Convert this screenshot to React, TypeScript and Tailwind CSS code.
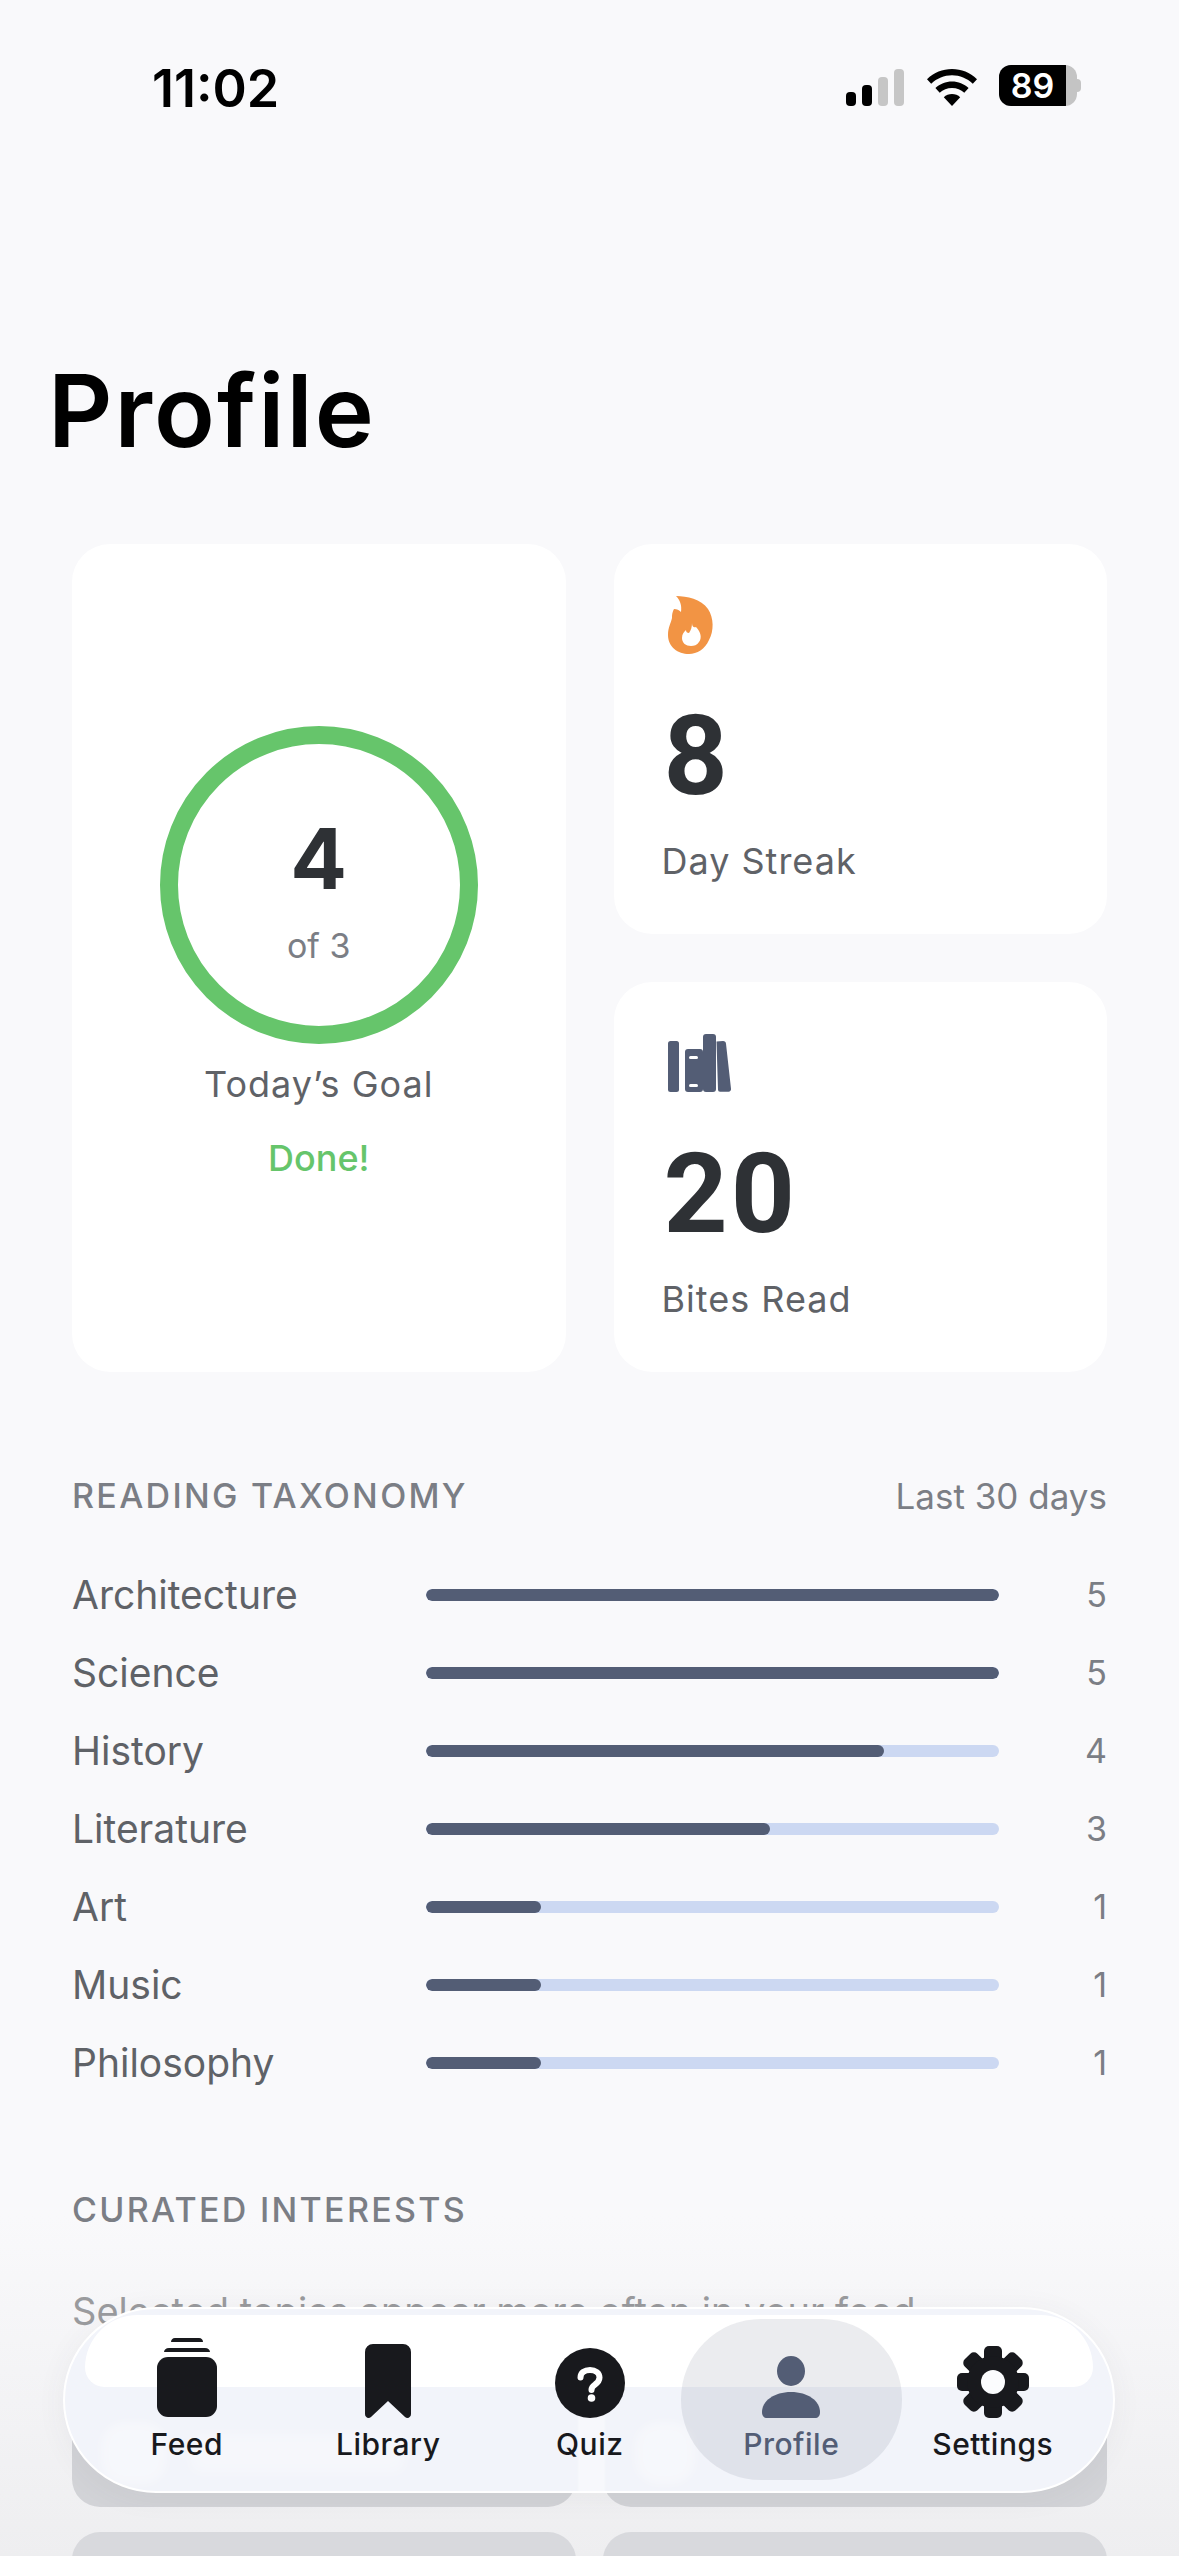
const topics = [
  { name: "Architecture", count: 5, fill: "w-full" },
  { name: "Science", count: 5, fill: "w-full" },
  { name: "History", count: 4, fill: "w-4/5" },
  { name: "Literature", count: 3, fill: "w-3/5" },
  { name: "Art", count: 1, fill: "w-1/5" },
  { name: "Music", count: 1, fill: "w-1/5" },
  { name: "Philosophy", count: 1, fill: "w-1/5" },
]

function StatusBar() {
  return (
    <div className="h-[176px] pt-[58px] pl-[152px] pr-[98px] flex items-start justify-between">
      <span className="text-[52px] leading-[62px] font-semibold text-black">11:02</span>
      <div className="flex items-start pt-[9px]">
        <svg width="58" height="37" viewBox="0 0 58 37" className="mt-[2px]">
          <rect x="0" y="23" width="10" height="14" rx="4" fill="#000" />
          <rect x="16" y="16" width="10" height="21" rx="4" fill="#000" />
          <rect x="32" y="8" width="10" height="29" rx="4" fill="#c6c6c6" />
          <rect x="48" y="0" width="10" height="37" rx="4" fill="#c6c6c6" />
        </svg>
        <svg width="50" height="37" viewBox="0 0 50 37" className="ml-[23px] mt-[2px]">
          <path d="M25 0C15.500 0 7 3.600 0 10.200l4.200 4.600C10 9.300 17.200 6.300 25 6.300s15 3 20.800 8.500l4.200-4.600C43 3.600 34.500 0 25 0Z" fill="#000" />
          <path d="M25 12.500c-6.300 0-12 2.400-16.600 6.600l4.300 4.700c3.300-3 7.500-4.800 12.300-4.800s9 1.800 12.300 4.800l4.300-4.700C37 14.900 31.300 12.500 25 12.500Z" fill="#000" />
          <path d="M25 25c-3.100 0-6 1.100-8.200 3.200L25 37l8.200-8.800C31 26.100 28.100 25 25 25Z" fill="#000" />
        </svg>
        <div className="ml-[22px] -mt-[2px] flex items-center">
          <div className="w-[78px] h-[41px] rounded-[12px] bg-[#c4c4c4] overflow-hidden">
            <div className="w-[67px] h-[41px] bg-black flex items-center justify-center text-white text-[34px] font-semibold leading-none">89</div>
          </div>
          <div className="w-[4px] h-[13px] bg-[#c4c4c4] rounded-r-full" />
        </div>
      </div>
    </div>
  )
}

function Flame() {
  return (
    <svg width="46" height="58" viewBox="0 0 46 58">
      <path d="M8 0C19 0 33 3 40 13c6 9 6 22 1 31-4 9-12 14-20 14C10 58 0 51 0 39c0-8 3-12 4-17 0-5 1-7 2-9 3 0 5 1 7 3 1-7-1-12-5-16Z" fill="#f29444" />
      <path d="M24 27c0 4 2 5 4 4 5 5 6 11 3 15-2 3-5 4-8 4-5 0-9-3-9-8 0-4 2-6 4-8 0 2 1 3 3 3 2-3 3-6 3-10Z" fill="#fff" />
    </svg>
  )
}

function Books() {
  return (
    <svg width="64" height="58" viewBox="0 0 64 58">
      <rect x="0" y="7" width="11" height="51" rx="2.500" fill="#535d75" />
      <path d="M17 18a3 3 0 0 1 3-3h12a3 3 0 0 1 3 3v37a3 3 0 0 1-3 3H20a3 3 0 0 1-3-3Z" fill="#535d75" />
      <rect x="21" y="22" width="9" height="3" rx="1.500" fill="#fff" />
      <rect x="21" y="50" width="9" height="3" rx="1.500" fill="#fff" />
      <rect x="35" y="0" width="13" height="58" rx="3" fill="#535d75" />
      <path d="M48.500 7.500 L55 7a3 3 0 0 1 3 2.700l5 45a2.500 2.500 0 0 1-2.500 3H52a2 2 0 0 1-2-2Z" fill="#535d75" />
    </svg>
  )
}

function FeedIcon() {
  return (
    <svg width="60" height="80" viewBox="0 0 60 80" fill="#18191d">
      <path d="M14 4c0-2 1.500-4 4-4h24c2.500 0 4 2 4 4Z" />
      <path d="M7 14c0-2 2-4 5-4h36c3 0 5 2 5 4Z" />
      <rect x="0" y="19" width="60" height="60" rx="11" />
    </svg>
  )
}

function LibraryIcon() {
  return (
    <svg width="46" height="74" viewBox="0 0 46 74" fill="#18191d">
      <path d="M0 8a8 8 0 0 1 8-8h30a8 8 0 0 1 8 8v62c0 3.500-3.500 5-6 3L23 57 6 73c-2.500 2-6 .5-6-3Z" />
    </svg>
  )
}

function QuizIcon() {
  return (
    <svg width="70" height="70" viewBox="0 0 70 70">
      <circle cx="35" cy="35" r="35" fill="#18191d" />
      <path d="M25.500 29.500c0-4.800 4-7.500 9.500-7.500s9.500 2.900 9.500 7.500c0 3.800-2.300 5.500-4.700 7.200-2.300 1.500-3.300 2.700-3.300 5.300" fill="none" stroke="#fff" strokeWidth="6" strokeLinecap="round" />
      <circle cx="36.500" cy="50" r="3.800" fill="#fff" />
    </svg>
  )
}

function ProfileIcon() {
  return (
    <svg width="58" height="62" viewBox="0 0 58 62" fill="#535d75">
      <ellipse cx="29" cy="15" rx="14" ry="15" />
      <path d="M0 56C0 45 12 36 29 36s29 9 29 20c0 4-2 6-5 6H5c-3 0-5-2-5-6Z" />
    </svg>
  )
}

function GearIcon() {
  const angles = [0, 45, 90, 135, 180, 225, 270, 315]
  return (
    <svg width="72" height="72" viewBox="0 0 72 72">
      {angles.map((a) => (
        <rect key={a} x="27" y="0" width="18" height="20" rx="5" fill="#18191d" transform={`rotate(${a} 36 36)`} />
      ))}
      <circle cx="36" cy="36" r="26" fill="#18191d" />
      <circle cx="36" cy="36" r="12" fill="#fbfcfe" />
    </svg>
  )
}

function NavItem({ label, active, icon }: { label: string; active?: boolean; icon: React.ReactNode }) {
  return (
    <div className="relative w-[201.500px] h-[130px] flex flex-col items-center">
      {active && <div className="absolute -left-[10px] -right-[10px] -top-[15px] h-[161px] rounded-[80px] bg-[#5b6478]/12" />}
      <div className="relative h-[84px] flex items-end">{icon}</div>
      <span className={`relative mt-[7px] text-[30px] leading-[38px] font-medium tracking-[0.5px] ${active ? "text-[#535d75]" : "text-[#18191d]"}`}>{label}</span>
    </div>
  )
}

function TabBar() {
  return (
    <div className="absolute left-[63px] top-[2307px] w-[1052px] h-[186px] rounded-[93px] border-2 border-white bg-[#f2f4fa] overflow-hidden shadow-[0_4px_30px_rgba(60,70,90,0.06)]">
      <div className="absolute left-[20px] right-[20px] top-[6px] h-[72px] rounded-t-[70px] rounded-b-[26px] bg-white" />
      <div className="absolute left-[36px] top-[113px] w-[66px] h-[62px] rounded-[24px] bg-white/35 blur-[5px]" />
      <div className="absolute left-[125px] top-[124px] w-[215px] h-[40px] rounded-[10px] bg-white/30 blur-[6px]" />
      <div className="absolute left-[513px] top-[75px] w-[27px] h-[110px] bg-white/40 blur-[1px]" />
      <div className="absolute left-[570px] top-[113px] w-[60px] h-[62px] rounded-[24px] bg-white/35 blur-[5px]" />
      <div className="relative pl-[21px] pt-[25px] flex">
        <NavItem label="Feed" icon={<FeedIcon />} />
        <NavItem label="Library" icon={<LibraryIcon />} />
        <NavItem label="Quiz" icon={<QuizIcon />} />
        <NavItem label="Profile" active icon={<ProfileIcon />} />
        <NavItem label="Settings" icon={<GearIcon />} />
      </div>
    </div>
  )
}

function StatCard({ icon, value, label }: { icon: React.ReactNode; value: string; label: string }) {
  return (
    <div className="h-[390px] rounded-[38px] bg-white pl-[48px] pt-[50px]">
      <div className="h-[60px] pl-[6px] flex items-end">{icon}</div>
      <div className="mt-[44px] pl-[2px] text-[112px] leading-[116px] font-bold text-[#2e3135] font-['Roboto'] tracking-[3px]">{value}</div>
      <div className="mt-[25px] text-[36px] leading-[44px] text-[#5f6267] tracking-[1px]">{label}</div>
    </div>
  )
}

export default function App() {
  return (
    <div className="relative w-[1179px] h-[2556px] overflow-hidden bg-[#f9f9fb] font-['Inter',sans-serif]">
      <div className="absolute inset-x-0 bottom-0 h-[340px] bg-gradient-to-b from-[#f9f9fb] to-[#eeeef0]" />
      <div className="relative">
        <StatusBar />
        <h1 className="pl-[48px] mt-[175px] text-[100px] leading-[120px] font-semibold text-black tracking-[2px]">Profile</h1>

        <div className="mt-[73px] mx-[72px] grid grid-cols-2 gap-[48px]">
          <div className="row-span-2 rounded-[38px] bg-white flex flex-col items-center pt-[182px]">
            <div className="w-[318px] h-[318px] rounded-full border-[18px] border-[#66c56b] flex flex-col items-center">
              <span className="mt-[65px] text-[84px] leading-[100px] font-bold text-[#2e3135]">4</span>
              <span className="mt-[16px] text-[34px] leading-[42px] text-[#7b7e85]">of 3</span>
            </div>
            <span className="mt-[18px] text-[36px] leading-[44px] text-[#5f6267] tracking-[1px]">Today’s Goal</span>
            <span className="mt-[30px] text-[36px] leading-[44px] font-medium text-[#66c56b]">Done!</span>
          </div>
          <StatCard icon={<Flame />} value="8" label="Day Streak" />
          <StatCard icon={<Books />} value="20" label="Bites Read" />
        </div>

        <div className="mt-[102px] mx-[72px] flex items-center justify-between text-[#7b7e85]">
          <span className="text-[34px] leading-[44px] font-medium tracking-[2.300px]">READING TAXONOMY</span>
          <span className="text-[35px] leading-[44px]">Last 30 days</span>
        </div>

        <div className="mt-[38px] mx-[72px] flex flex-col">
          {topics.map((t) => (
            <div key={t.name} className="h-[78px] flex items-center">
              <span className="w-[354px] text-[39px] leading-[48px] text-[#5f6267]">{t.name}</span>
              <div className="w-[573px] h-[12px] rounded-full bg-[#ccd8f2] overflow-hidden">
                <div className={`h-full rounded-full bg-[#535d75] ${t.fill}`} />
              </div>
              <span className="ml-auto text-[34px] leading-[44px] text-[#7b7e85]">{t.count}</span>
            </div>
          ))}
        </div>

        <div className="mt-[86px] mx-[72px] text-[34px] leading-[44px] font-medium tracking-[2.300px] text-[#7b7e85]">CURATED INTERESTS</div>
        <div className="mt-[55px] mx-[72px] text-[38px] leading-[48px] text-[#9a9b9e]">Selected topics appear more often in your feed</div>

        <div className="mt-[40px] mx-[72px] grid grid-cols-2 gap-x-[27px] gap-y-[25px]">
          <div className="h-[132px] rounded-[28px] bg-[#d2d3d7]" />
          <div className="h-[132px] rounded-[28px] bg-[#d2d3d7]" />
          <div className="h-[132px] rounded-[28px] bg-[#d8d9dd]" />
          <div className="h-[132px] rounded-[28px] bg-[#d8d9dd]" />
        </div>
      </div>

      <TabBar />
    </div>
  )
}
